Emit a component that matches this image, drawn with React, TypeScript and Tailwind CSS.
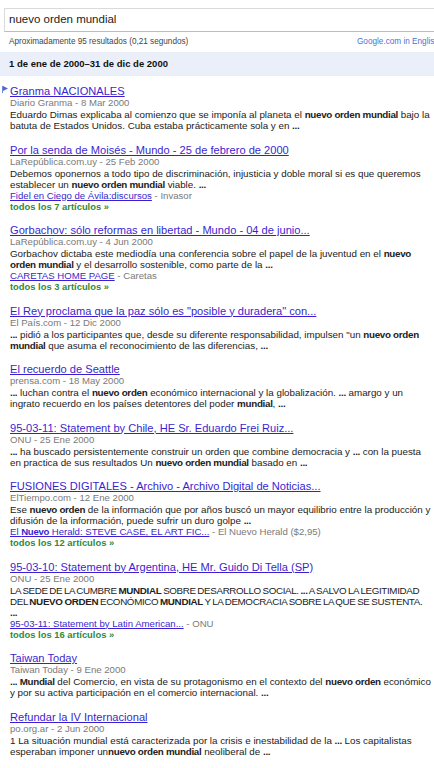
import React from "react";

type Seg = string | { b: string };
type Result = {
  title: string;
  meta: string;
  lines: Seg[][];
  related?: { link: Seg[]; src: string };
  all?: string;
  flag?: boolean;
  caps?: boolean;
};

const results: Result[] = [
  {
    flag: true,
    title: "Granma NACIONALES",
    meta: "Diario Granma - 8 Mar 2000",
    lines: [
      ["Eduardo Dimas explicaba al comienzo que se imponía al planeta el ", { b: "nuevo orden mundial" }, " bajo la"],
      ["batuta de Estados Unidos. Cuba estaba prácticamente sola y en ", { b: "..." }],
    ],
  },
  {
    title: "Por la senda de Moisés - Mundo - 25 de febrero de 2000",
    meta: "LaRepública.com.uy - 25 Feb 2000",
    lines: [
      ["Debemos oponernos a todo tipo de discriminación, injusticia y doble moral si es que queremos"],
      ["establecer un ", { b: "nuevo orden mundial" }, " viable. ", { b: "..." }],
    ],
    related: { link: ["Fidel en Ciego de Ávila:discursos"], src: "Invasor" },
    all: "todos los 7 artículos »",
  },
  {
    title: "Gorbachov: sólo reformas en libertad - Mundo - 04 de junio...",
    meta: "LaRepública.com.uy - 4 Jun 2000",
    lines: [
      ["Gorbachov dictaba este mediodía una conferencia sobre el papel de la juventud en el ", { b: "nuevo" }],
      [{ b: "orden mundial" }, " y el desarrollo sostenible, como parte de la ", { b: "..." }],
    ],
    related: { link: ["CARETAS HOME PAGE"], src: "Caretas" },
    all: "todos los 3 artículos »",
  },
  {
    title: "El Rey proclama que la paz sólo es \"posible y duradera\" con...",
    meta: "El País.com - 12 Dic 2000",
    lines: [
      [{ b: "..." }, " pidió a los participantes que, desde su diferente responsabilidad, impulsen \"un ", { b: "nuevo orden" }],
      [{ b: "mundial" }, " que asuma el reconocimiento de las diferencias, ", { b: "..." }],
    ],
  },
  {
    title: "El recuerdo de Seattle",
    meta: "prensa.com - 18 May 2000",
    lines: [
      [{ b: "..." }, " luchan contra el ", { b: "nuevo orden" }, " económico internacional y la globalización. ", { b: "..." }, " amargo y un"],
      ["ingrato recuerdo en los países detentores del poder ", { b: "mundial" }, ", ", { b: "..." }],
    ],
  },
  {
    title: "95-03-11: Statement by Chile, HE Sr. Eduardo Frei Ruiz...",
    meta: "ONU - 25 Ene 2000",
    lines: [
      [{ b: "..." }, " ha buscado persistentemente construir un orden que combine democracia y ", { b: "..." }, " con la puesta"],
      ["en practica de sus resultados Un ", { b: "nuevo orden mundial" }, " basado en ", { b: "..." }],
    ],
  },
  {
    title: "FUSIONES DIGITALES - Archivo - Archivo Digital de Noticias...",
    meta: "ElTiempo.com - 12 Ene 2000",
    lines: [
      ["Ese ", { b: "nuevo orden" }, " de la información que por años buscó un mayor equilibrio entre la producción y"],
      ["difusión de la información, puede sufrir un duro golpe ", { b: "..." }],
    ],
    related: { link: ["El ", { b: "Nuevo" }, " Herald: STEVE CASE, EL ART FIC..."], src: "El Nuevo Herald ($2,95)" },
    all: "todos los 12 artículos »",
  },
  {
    caps: true,
    title: "95-03-10: Statement by Argentina, HE Mr. Guido Di Tella (SP)",
    meta: "ONU - 25 Ene 2000",
    lines: [
      ["LA SEDE DE LA CUMBRE ", { b: "MUNDIAL" }, " SOBRE DESARROLLO SOCIAL. ", { b: "..." }, " A SALVO LA LEGITIMIDAD"],
      ["DEL ", { b: "NUEVO ORDEN" }, " ECONÓMICO ", { b: "MUNDIAL" }, " Y LA DEMOCRACIA SOBRE LA QUE SE SUSTENTA."],
      [{ b: "..." }],
    ],
    related: { link: ["95-03-11: Statement by Latin American..."], src: "ONU" },
    all: "todos los 16 artículos »",
  },
  {
    title: "Taiwan Today",
    meta: "Taiwan Today - 9 Ene 2000",
    lines: [
      [{ b: "... Mundial" }, " del Comercio, en vista de su protagonismo en el contexto del ", { b: "nuevo orden" }, " económico"],
      ["y por su activa participación en el comercio internacional. ", { b: "..." }],
    ],
  },
  {
    title: "Refundar la IV Internacional",
    meta: "po.org.ar - 2 Jun 2000",
    lines: [
      ["1 La situación mundial está caracterizada por la crisis e inestabilidad de la ", { b: "..." }, " Los capitalistas"],
      ["esperaban imponer un", { b: "nuevo orden mundial" }, " neoliberal de ", { b: "..." }],
    ],
  },
];

function Segs({ segs }: { segs: Seg[] }) {
  return (
    <>
      {segs.map((s, i) =>
        typeof s === "string" ? (
          <span key={i}>{s}</span>
        ) : (
          <b key={i} className="font-bold tracking-[-0.3px]">
            {s.b}
          </b>
        )
      )}
    </>
  );
}

function Flag() {
  return (
    <svg width="6" height="7" viewBox="0 0 6 7" className="absolute left-[-8px] top-[1px]">
      <rect x="0" y="0" width="1" height="7" fill="#6f86d8" />
      <polygon points="1,0 6,2.5 1,5" fill="#4a67d2" />
    </svg>
  );
}

function ResultItem({ r }: { r: Result }) {
  return (
    <div className="mb-[12.5px]">
      <div className="relative text-[11.1px] leading-[12px] whitespace-nowrap">
        {r.flag && <Flag />}
        <a className="text-[#3a1fd0] underline">{r.title}</a>
      </div>
      <div className="text-[9.6px] leading-[12px] text-[#7a7a7a] whitespace-nowrap">{r.meta}</div>
      <div
        className={
          r.caps
            ? "text-[9.8px] leading-[11px] text-[#222] whitespace-nowrap tracking-[-0.35px] [word-spacing:-0.7px]"
            : "text-[9.8px] leading-[11px] text-[#222] whitespace-nowrap"
        }
      >
        {r.lines.map((l, i) => (
          <div key={i}>
            <Segs segs={l} />
          </div>
        ))}
      </div>
      {r.related && (
        <div className="text-[9.6px] leading-[11px] whitespace-nowrap">
          <a className="text-[#3a1fd0] underline">
            <Segs segs={r.related.link} />
          </a>
          <span className="text-[#7a7a7a]"> - {r.related.src}</span>
        </div>
      )}
      {r.all && (
        <div className="text-[9.4px] leading-[11px] font-bold text-[#2f8a3c] whitespace-nowrap">{r.all}</div>
      )}
    </div>
  );
}

export default function App() {
  return (
    <div className="w-[434px] h-[768px] overflow-hidden bg-white font-['Liberation_Sans',Arial,sans-serif]">
      <div className="pt-2 pl-1">
        <div className="w-[460px] h-6 border border-[#dadada] border-b-[#bdbdbd] flex items-center pl-[4px] text-[11.5px] text-[#222]">
          nuevo orden mundial
        </div>
      </div>
      <div className="mt-1 h-3 flex items-center pl-[9px] text-[8.2px] whitespace-nowrap">
        <span className="w-[348px] shrink-0 text-[#444]">Aproximadamente 95 resultados (0,21 segundos)</span>
        <a className="text-[#4a72d8]">Google.com in English</a>
      </div>
      <div className="mt-1 h-6 bg-[#ebeff9] flex items-center pl-[9px] text-[9.5px] font-bold text-[#111]">
        1 de ene de 2000–31 de dic de 2000
      </div>
      <div className="pt-[9px] pl-[10px]">
        {results.map((r, i) => (
          <ResultItem key={i} r={r} />
        ))}
      </div>
    </div>
  );
}
